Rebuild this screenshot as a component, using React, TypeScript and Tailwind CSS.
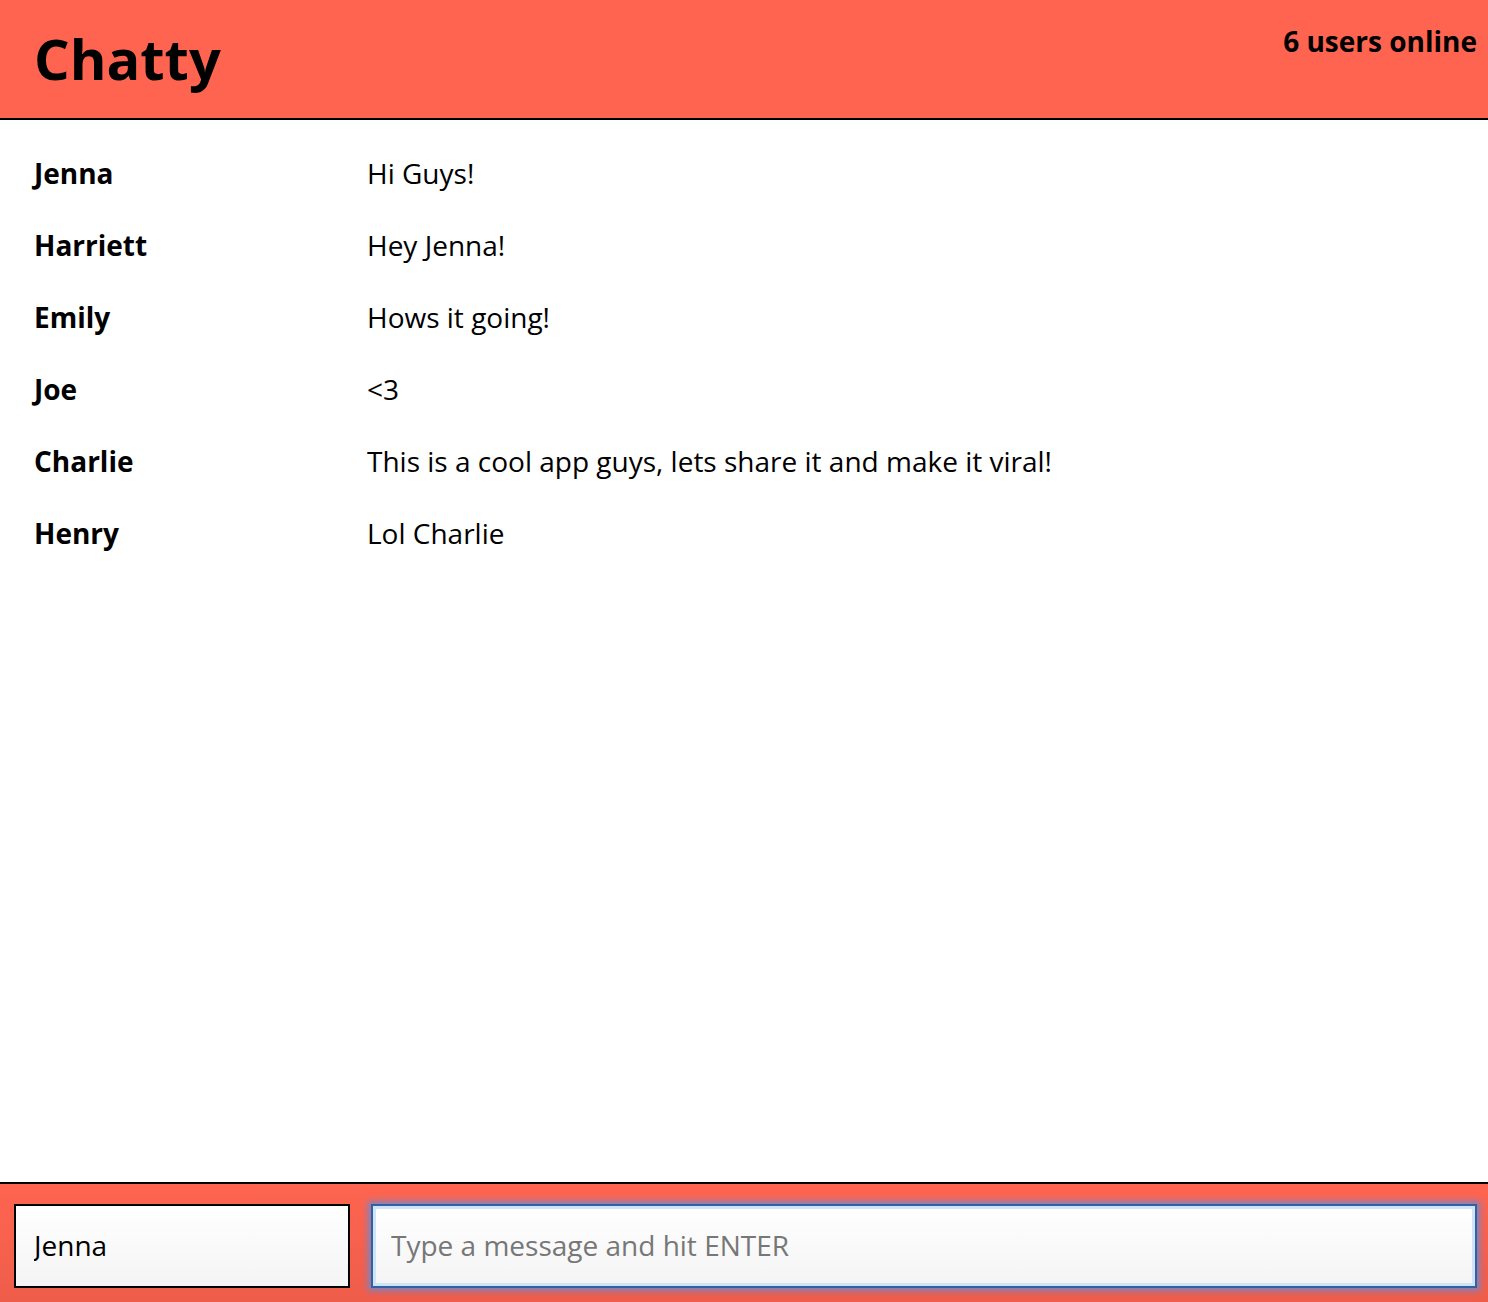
const messages = [
  { user: "Jenna", text: "Hi Guys!" },
  { user: "Harriett", text: "Hey Jenna!" },
  { user: "Emily", text: "Hows it going!" },
  { user: "Joe", text: "<3" },
  { user: "Charlie", text: "This is a cool app guys, lets share it and make it viral!" },
  { user: "Henry", text: "Lol Charlie" },
];

export default function App() {
  return (
    <div className="flex h-[1302px] flex-col bg-white text-black [font-family:'Open_Sans',sans-serif]">
      <nav className="flex h-[120px] shrink-0 items-start justify-between border-b-2 border-black bg-[#ff6450] pl-[34px] pr-[11px]">
        <h1 className="mt-[25px] text-[56px] font-bold leading-[1.2]">Chatty</h1>
        <span className="mt-[22px] text-[28px] font-bold leading-[1.4]">6 users online</span>
      </nav>

      <main className="flex-1 pl-[34px] pt-[17px]">
        {messages.map((m, i) => (
          <div key={i} className="flex py-[15px] text-[28px] leading-[42px]">
            <span className="w-[333px] shrink-0 font-bold">{m.user}</span>
            <span>{m.text}</span>
          </div>
        ))}
      </main>

      <footer className="flex h-[120px] shrink-0 items-start gap-[21px] border-t-2 border-black bg-gradient-to-b from-[#ff6550] to-[#ee5d4a] pl-[14px] pr-[11px] pt-[20px]">
        <input
          defaultValue="Jenna"
          className="h-[84px] w-[336px] border-2 border-black bg-gradient-to-b from-white to-[#f4f4f4] px-[18px] pb-[2px] text-[28px] outline-none"
        />
        <input
          placeholder="Type a message and hit ENTER"
          className="h-[84px] flex-1 border-2 border-[#2f62a3] bg-gradient-to-b from-white to-[#f4f4f4] px-[18px] pb-[2px] text-[28px] shadow-[inset_0_0_0_3px_#cfe3f9,0_0_6px_3px_rgba(90,140,230,0.75)] outline-none placeholder:text-[#777]"
        />
      </footer>
    </div>
  );
}
